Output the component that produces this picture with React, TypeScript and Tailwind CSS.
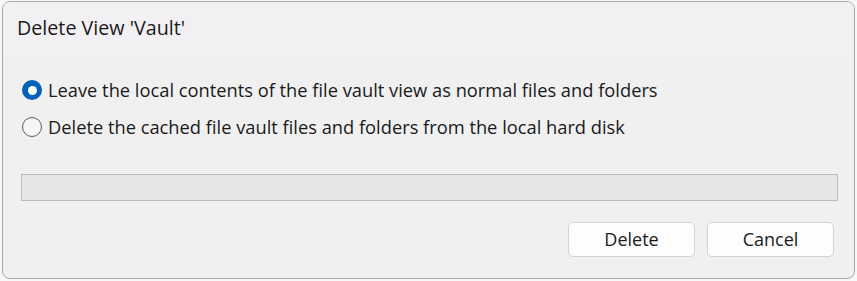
import React from "react";

export default function App() {
  const font = { fontFamily: '"Open Sans", "Noto Sans", sans-serif' };
  return (
    <div className="w-[857px] h-[281px] bg-[#f7f7f7] pl-[2px] pt-[1px]" style={font}>
      <div className="w-[853px] h-[278px] rounded-[8px] border border-[#a9a9ab] bg-[#f0f0f0] overflow-hidden flex flex-col">
        <div className="h-[54px] bg-[#f3f0f4] flex items-center pl-[14px] text-[19.7px] text-[#1a1a1a] pb-[3px]">
          Delete View 'Vault'
        </div>
        <div className="flex flex-col pl-[19px] pt-[22px] gap-[13px] text-[18.3px] text-[#1a1a1a]">
          <label className="flex items-center gap-[6px] h-[24px]">
            <span className="w-[20px] h-[20px] rounded-full bg-[#0063b8] flex items-center justify-center">
              <span className="w-[9px] h-[9px] rounded-full bg-white" />
            </span>
            Leave the local contents of the file vault view as normal files and folders
          </label>
          <label className="flex items-center gap-[6px] h-[24px]">
            <span className="w-[20px] h-[20px] rounded-full border border-[#5d5d5d] bg-[#f6f6f6]" />
            Delete the cached file vault files and folders from the local hard disk
          </label>
        </div>
        <div className="pl-[18px] pr-[16px] pt-[35px]">
          <div className="h-[27px] border border-[#bcbcbc] bg-[#e6e6e6]" />
        </div>
        <div className="flex justify-end gap-[12px] pr-[20px] pt-[21px]">
          <button className="w-[127px] h-[35px] rounded-[5px] border border-[#d2d2d2] bg-[#fdfdfd] text-[18px] text-[#1a1a1a]">
            Delete
          </button>
          <button className="w-[127px] h-[35px] rounded-[5px] border border-[#d2d2d2] bg-[#fdfdfd] text-[18px] text-[#1a1a1a]">
            Cancel
          </button>
        </div>
      </div>
    </div>
  );
}
